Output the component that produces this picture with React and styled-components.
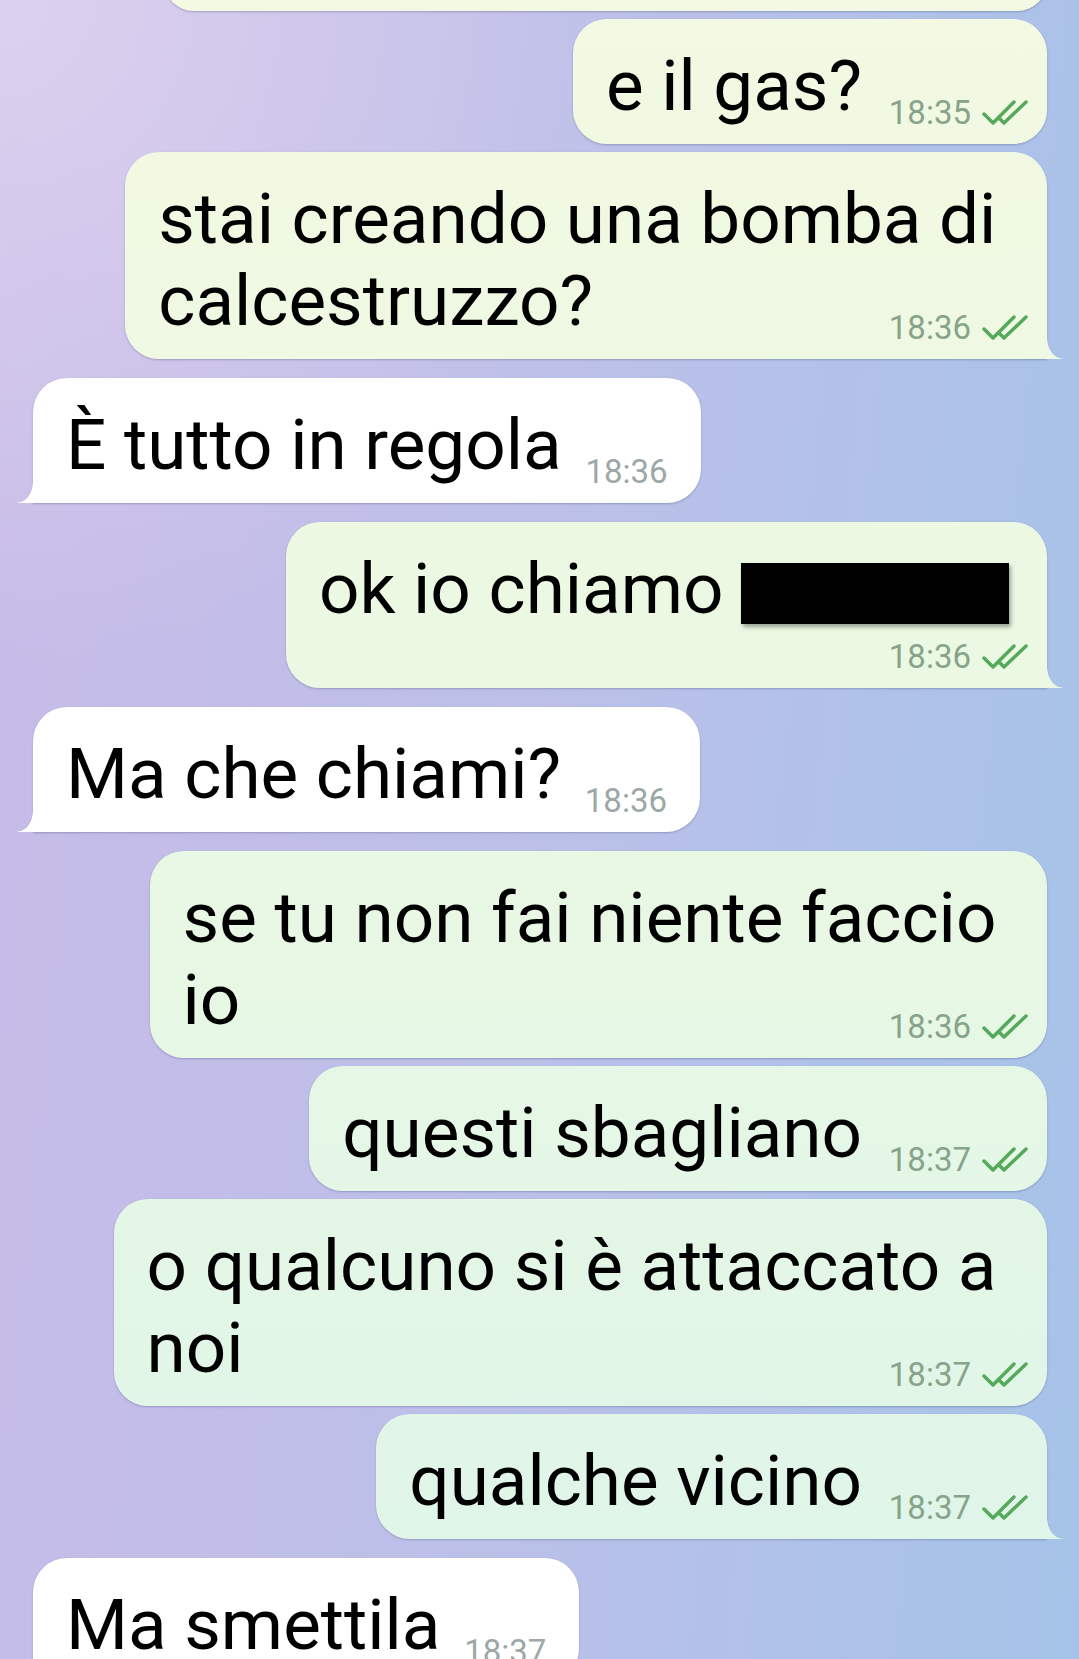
import React from 'react'
import styled, { createGlobalStyle, css } from 'styled-components'

const WALL = `radial-gradient(ellipse 60% 40% at 0% 0%, rgba(220, 209, 238, 1) 0%, rgba(220, 209, 238, 0) 100%), linear-gradient(96deg, #c8bbe8 0%, #bcc0e9 50%, #a5c3e8 100%)`
const OUT_FILL = `linear-gradient(180deg, #f3f9e2 0%, #e9f8e3 50%, #def5ea 100%)`

const GlobalStyle = createGlobalStyle`
  html, body {
    margin: 0;
    padding: 0;
    height: 100%;
  }
  body {
    background: ${WALL};
    background-attachment: fixed;
    font-family: Roboto, "Noto Sans", sans-serif;
    -webkit-font-smoothing: antialiased;
  }
`

const Screen = styled.div`
  height: 100vh;
  overflow: hidden;
`

const Feed = styled.div`
  display: flex;
  flex-direction: column;
`

const Row = styled.div`
  display: flex;
  justify-content: ${p => (p.$out ? 'flex-end' : 'flex-start')};
  padding: 0 32px 0 33px;
  margin-top: ${p => p.$gap}px;
`

const tailRight = css`
  border-bottom-right-radius: 0;
  &::before {
    content: '';
    position: absolute;
    right: -16px;
    bottom: 0;
    width: 16px;
    height: 20px;
    background: ${OUT_FILL};
    background-attachment: fixed;
    -webkit-mask-image: radial-gradient(ellipse 16px 20px at 100% 0, transparent 96%, #000 100%);
    mask-image: radial-gradient(ellipse 16px 20px at 100% 0, transparent 96%, #000 100%);
  }
`

const tailLeft = css`
  border-bottom-left-radius: 0;
  &::before {
    content: '';
    position: absolute;
    left: -16px;
    bottom: 0;
    width: 16px;
    height: 20px;
    background: #fff;
    -webkit-mask-image: radial-gradient(ellipse 16px 20px at 0 0, transparent 96%, #000 100%);
    mask-image: radial-gradient(ellipse 16px 20px at 0 0, transparent 96%, #000 100%);
  }
`

const Bubble = styled.div`
  position: relative;
  display: grid;
  padding: 26px 33px 17px;
  border-radius: 34px;
  background: ${p => (p.$out ? OUT_FILL : '#ffffff')};
  background-attachment: fixed;
  box-shadow: 0 1px 2px rgba(50, 60, 90, 0.3);
  ${p => p.$tail && (p.$out ? tailRight : tailLeft)}
`

const CutBubble = styled(Bubble)`
  width: 883px;
  height: 60px;
  box-sizing: border-box;
  margin-top: -49px;
`

const Text = styled.div`
  grid-area: 1 / 1;
  font-size: 31px;
  line-height: 41px;
  white-space: pre;
`

const Body = styled.span`
  font-size: 71px;
  line-height: 82px;
  color: #000;
`

const Redacted = styled.span`
  display: inline-block;
  width: 268px;
  height: 61px;
  margin-right: 5px;
  vertical-align: -11px;
  background: #000;
  box-shadow: 2px 3px 4px rgba(0, 0, 0, 0.35);
`

const Spacer = styled.span`
  display: inline-block;
  width: ${p => (p.$out ? 152 : 106)}px;
  height: 0;
`

const Meta = styled.span`
  grid-area: 1 / 1;
  justify-self: end;
  align-self: end;
  display: inline-flex;
  align-items: center;
  gap: 11px;
  margin: 0 ${p => (p.$out ? -14 : 0)}px -2px 0;
  font-size: 33px;
  line-height: 33px;
  color: ${p => (p.$out ? '#87a48a' : '#9ca7a7')};
`

const Checks = () => (
  <svg width="46" height="25" viewBox="0 0 46 25" fill="none" stroke="#55a95b" strokeWidth="3.5" strokeLinecap="round" strokeLinejoin="round">
    <path d="M2 14 L11 23 L32 2" />
    <path d="M18 19 L22 23 L44 2" />
  </svg>
)

const messages = [
  { out: true, lines: ['e il gas?'], time: '18:35' },
  { out: true, lines: ['stai creando una bomba di ', 'calcestruzzo?'], time: '18:36', tail: true },
  { out: false, lines: ['È tutto in regola'], time: '18:36', tail: true, group: true },
  { out: true, lines: ['ok io chiamo '], redacted: true, ownRow: true, time: '18:36', tail: true, group: true },
  { out: false, lines: ['Ma che chiami?'], time: '18:36', tail: true, group: true },
  { out: true, lines: ['se tu non fai niente faccio ', 'io'], time: '18:36', group: true },
  { out: true, lines: ['questi sbagliano'], time: '18:37' },
  { out: true, lines: ['o qualcuno si è attaccato a ', 'noi'], time: '18:37' },
  { out: true, lines: ['qualche vicino'], time: '18:37', tail: true },
  { out: false, lines: ['Ma smettila'], time: '18:37', tail: true, group: true },
]

const Message = ({ m }) => (
  <Row $out={m.out} $gap={m.group ? 19 : 8}>
    <Bubble $out={m.out} $tail={m.tail}>
      <Text>
        <Body>
          {m.lines.join('\n')}
          {m.redacted && <Redacted />}
        </Body>
        {m.ownRow && '\n'}
        <Spacer $out={m.out} />
      </Text>
      <Meta $out={m.out}>
        {m.time}
        {m.out && <Checks />}
      </Meta>
    </Bubble>
  </Row>
)

export default function App() {
  return (
    <Screen>
      <GlobalStyle />
      <Feed>
        <Row $out $gap={0}>
          <CutBubble $out />
        </Row>
        {messages.map((m, i) => (
          <Message key={i} m={m} />
        ))}
      </Feed>
    </Screen>
  )
}
